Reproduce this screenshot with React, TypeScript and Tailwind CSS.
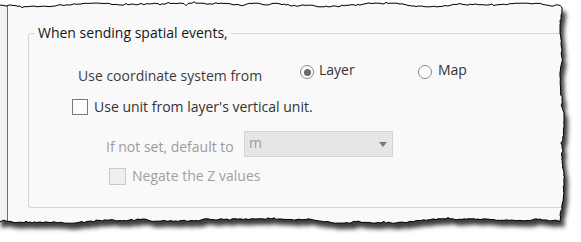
import React from 'react';

// deterministic jitter for the torn paper edge
function makeRand(seed: number) {
  let s = seed;
  return () => {
    s = (s * 1103515245 + 12345) % 2147483648;
    return s / 2147483648;
  };
}

function buildPaperPath() {
  const r = makeRand(7);
  const pts: [number, number][] = [];
  let d = 0;
  const walk = (amp: number) => {
    d += (r() - 0.5) * 1.6;
    if (d > amp) d = amp;
    if (d < -amp) d = -amp;
    const spike = r() < 0.12 ? (r() - 0.5) * 3 : 0;
    return d + spike;
  };
  pts.push([-3, 5]);
  for (let x = 0; x <= 560; x += 2) pts.push([x, 5 + walk(1.8)]);
  d = 0;
  for (let y = 7; y <= 220; y += 2) pts.push([562 + walk(2), y]);
  d = 0;
  for (let x = 560; x >= 0; x -= 2) pts.push([x, 221 + walk(2.2)]);
  pts.push([-3, 221]);
  return 'M' + pts.map(([x, y]) => `${x.toFixed(1)} ${y.toFixed(1)}`).join('L') + 'Z';
}

const paper = buildPaperPath();

function TornEdges() {
  const outer = 'M0 0H581V242H0Z';
  return (
    <svg className="pointer-events-none absolute inset-0" width={581} height={242}>
      <defs>
        <clipPath id="outside">
          <path clipRule="evenodd" d={`${outer} ${paper}`} />
        </clipPath>
        <filter id="soft" x="-5%" y="-5%" width="110%" height="115%">
          <feGaussianBlur stdDeviation="2.2" />
        </filter>
      </defs>
      <path d={`${outer} ${paper}`} fillRule="evenodd" fill="#fff" />
      <g clipPath="url(#outside)">
        <path d={paper} transform="translate(4 6)" fill="#3c3c3c" filter="url(#soft)" />
      </g>
      <path d={paper} fill="none" stroke="#000" strokeWidth={1} />
    </svg>
  );
}

function Radio({ checked }: { checked?: boolean }) {
  return (
    <span className="flex h-[14px] w-[14px] items-center justify-center rounded-full border border-[#8a8a8a] bg-[#fdfdfd]">
      {checked && <span className="h-[7px] w-[7px] rounded-full bg-[#6a6a6a]" />}
    </span>
  );
}

export default function App() {
  return (
    <div className="relative h-[242px] w-[581px] overflow-hidden bg-[#f9f9f9] font-['Open_Sans',sans-serif] text-[14px] leading-[20px]">
      <div className="flex h-full">
        <div className="w-[7px] shrink-0 bg-[#f3f3f3]" />
        <div className="w-px shrink-0 bg-[#6e6e6e]" />
        <div className="min-w-0 flex-1">
          <fieldset className="ml-[20px] mt-[23px] h-[185px] w-[572px] rounded-[3px] border border-[#d6d6d6]">
            <legend className="ml-[6px] px-[3px] text-[#151515]">When sending spatial events,</legend>
            <div className="flex flex-col whitespace-nowrap">
              <div className="mt-[17px] flex h-[25px] items-start">
                <span className="mt-[6px] w-[222px] shrink-0 pl-[49px] text-[#3d3d3d]">
                  Use coordinate system from
                </span>
                <label className="ml-[49px] flex w-[118px] shrink-0 items-start gap-[5px] text-[#333]">
                  <span className="mt-[5px]">
                    <Radio checked />
                  </span>
                  Layer
                </label>
                <label className="flex items-start gap-[6px] text-[#333]">
                  <span className="mt-[5px]">
                    <Radio />
                  </span>
                  Map
                </label>
              </div>
              <div className="mt-[12px] flex h-[20px] items-center">
                <span className="ml-[43px] h-[16px] w-[16px] shrink-0 border border-[#7a7a7a] bg-[#fdfdfd]" />
                <span className="ml-[6px] text-[#333]">Use unit from layer's vertical unit.</span>
              </div>
              <div className="mt-[14px] flex h-[26px] items-start">
                <span className="mt-[6px] w-[215px] shrink-0 pl-[77px] text-[#9c9c9c]">If not set, default to</span>
                <div className="flex h-[26px] w-[149px] shrink-0 items-start justify-between border border-[#d4d4d4] bg-[#e6e6e6] pl-[4px] pr-[5px]">
                  <span className="mt-[1px] text-[#9a9a9a]">m</span>
                  <svg width="8" height="5" viewBox="0 0 8 5" className="mt-[10px]">
                    <path d="M0 0H8L4 5Z" fill="#7a7a7a" />
                  </svg>
                </div>
              </div>
              <div className="mt-[9px] flex h-[20px] items-center">
                <span className="ml-[80px] h-[17px] w-[17px] shrink-0 border border-[#c9c9c9] bg-[#eeeeee]" />
                <span className="ml-[6px] text-[#a0a0a0]">Negate the Z values</span>
              </div>
            </div>
          </fieldset>
        </div>
      </div>
      <TornEdges />
    </div>
  );
}
